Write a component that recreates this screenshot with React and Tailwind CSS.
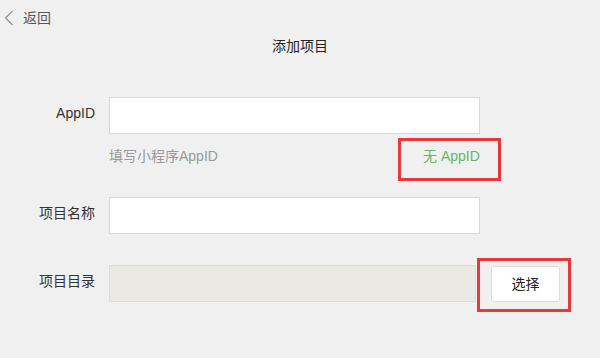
import React from "react";

export default function App() {
  return (
    <div
      className="w-[600px] h-[358px] bg-[#f0f0f0] text-[14px] text-[#333] overflow-hidden"
      style={{ fontFamily: '"Liberation Sans", "Noto Sans CJK SC", sans-serif' }}
    >
      {/* back */}
      <div className="h-[35px] flex items-center pl-[4px]">
        <svg width="10" height="16" viewBox="0 0 10 16" className="block">
          <path d="M8.5 1 L1.5 8 L8.5 15" fill="none" stroke="#8a8a8a" strokeWidth="1.1" />
        </svg>
        <span className="ml-[9px] text-[#555] leading-[20px]">返回</span>
      </div>

      {/* title */}
      <div className="h-[22px] leading-[22px] text-center text-[#222]">添加项目</div>

      {/* AppID row */}
      <div className="mt-[40px] flex items-center">
        <div className="w-[95px] h-[37px] flex items-center justify-end pb-[4px]">AppID</div>
        <div className="ml-[14px] w-[371px] h-[37px] bg-white border border-[#d9d9d9]" />
      </div>

      {/* hint row */}
      <div className="mt-[4px] w-[501px] pl-[109px] flex items-start justify-between">
        <span className="mt-[8px] h-[20px] leading-[20px] text-[#999]">填写小程序AppID</span>
        <div className="w-[103px] h-[43px] border-[3px] border-[#e5393b] pl-[22px] pt-[5px]">
          <span className="block h-[20px] leading-[20px] text-[#62b862] whitespace-nowrap">无 AppID</span>
        </div>
      </div>

      {/* project name */}
      <div className="mt-[16px] flex items-center">
        <div className="w-[95px] h-[37px] flex items-center justify-end pb-[4px]">项目名称</div>
        <div className="ml-[14px] w-[371px] h-[37px] bg-white border border-[#d9d9d9]" />
      </div>

      {/* project dir */}
      <div className="mt-[24px] flex items-start">
        <div className="mt-[7px] w-[95px] h-[37px] flex items-center justify-end pb-[4px]">项目目录</div>
        <div className="mt-[7px] ml-[14px] w-[367px] h-[37px] bg-[#ebe9e4] border border-[#dedcd7]" />
        <div className="ml-[1px] w-[94px] h-[54px] border-[3px] border-[#e5393b] pl-[11px] pt-[5px]">
          <button className="w-[69px] h-[36px] bg-white border border-[#dcdcdc] rounded-[3px] text-[#222] text-[14px] leading-[20px] flex items-center justify-center">
            选择
          </button>
        </div>
      </div>
    </div>
  );
}
